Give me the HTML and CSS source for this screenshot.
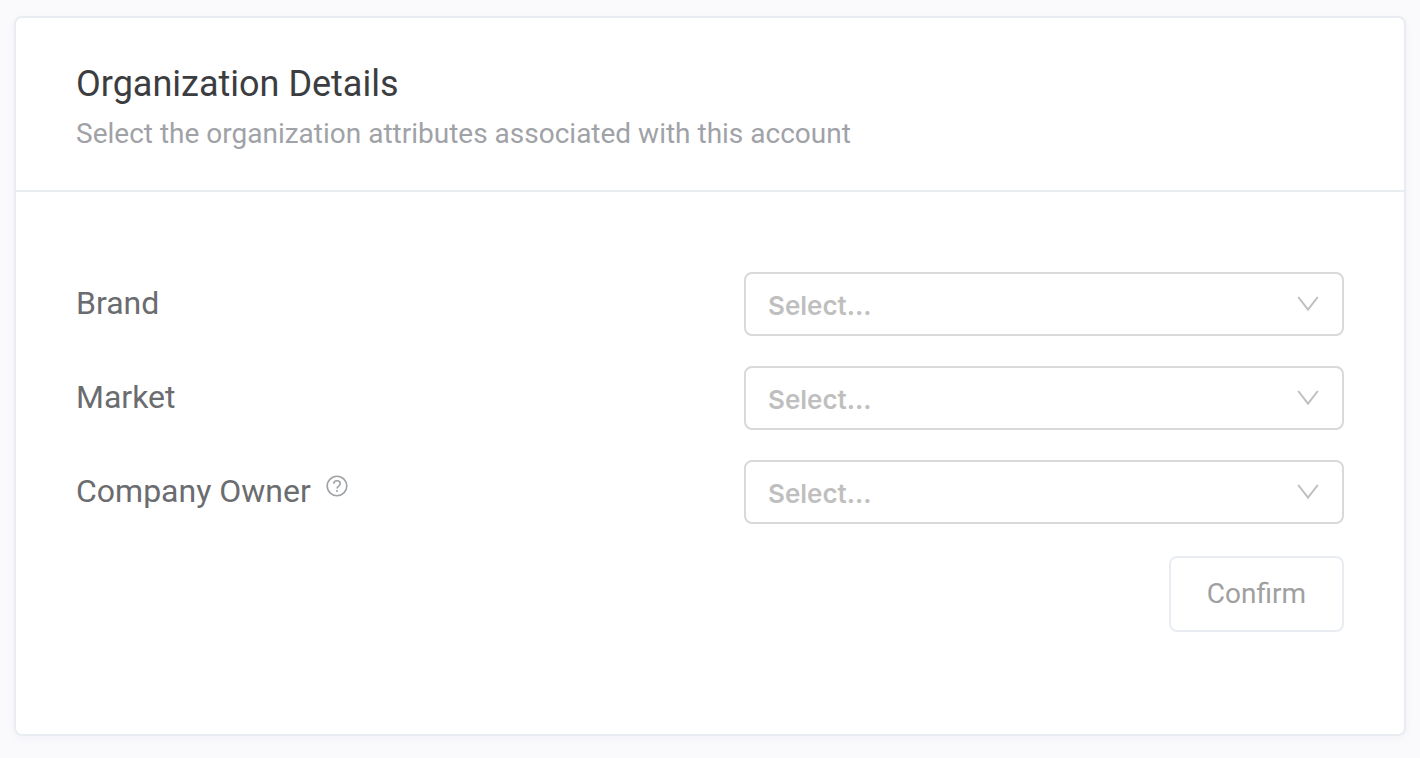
FILE: index.html
```html
<!DOCTYPE html>
<html lang="en">
<head>
  <meta charset="UTF-8" />
  <meta name="viewport" content="width=device-width, initial-scale=1.0" />
  <title>Organization Details</title>
  <link rel="stylesheet" href="styles.css">
</head>
<body>
  <main class="card">
    <header class="card-header">
      <h1 class="title">Organization Details</h1>
      <p class="subtitle">Select the organization attributes associated with this account</p>
    </header>
    <form class="card-body">
      <div class="form-row">
        <label class="form-label" for="brand">Brand</label>
        <div class="select-wrap">
          <select class="select" id="brand">
            <option value="">Select...</option>
          </select>
          <svg class="chevron" viewBox="0 0 22 16" aria-hidden="true">
            <path d="M1.2 1 11 13.6 20.8 1"/>
          </svg>
        </div>
      </div>
      <div class="form-row">
        <label class="form-label" for="market">Market</label>
        <div class="select-wrap">
          <select class="select" id="market">
            <option value="">Select...</option>
          </select>
          <svg class="chevron" viewBox="0 0 22 16" aria-hidden="true">
            <path d="M1.2 1 11 13.6 20.8 1"/>
          </svg>
        </div>
      </div>
      <div class="form-row">
        <div class="label-group">
          <label class="form-label" for="owner">Company Owner</label>
          <svg class="help-icon" viewBox="0 0 22 22" aria-hidden="true">
            <circle cx="11" cy="11" r="9.8"/>
            <path d="M7.8 8.7c0-1.7 1.4-2.9 3.2-2.9s3.2 1.2 3.2 2.9c0 2.4-3.2 2.4-3.2 4.9"/>
            <circle class="dot" cx="11" cy="15.9" r="1"/>
          </svg>
        </div>
        <div class="select-wrap">
          <select class="select" id="owner">
            <option value="">Select...</option>
          </select>
          <svg class="chevron" viewBox="0 0 22 16" aria-hidden="true">
            <path d="M1.2 1 11 13.6 20.8 1"/>
          </svg>
        </div>
      </div>
      <div class="actions">
        <button class="confirm-button" type="submit" disabled>Confirm</button>
      </div>
    </form>
  </main>
</body>
</html>
```
FILE: styles.css
```css
* {
  box-sizing: border-box;
}
body {
  margin: 0;
  padding: 16px 14px 22px;
  background-color: #fafafd;
  font-family: Roboto, sans-serif;
}
.card {
  background-color: #fff;
  border: 2px solid #e9edf2;
  border-radius: 8px;
  box-shadow: 0 2px 8px rgba(30, 40, 80, 0.04);
}
.card-header {
  padding: 44px 60px 38px;
  border-bottom: 2px solid #e9edf0;
}
.title {
  margin: 0;
  font-size: 36px;
  line-height: 44px;
  font-weight: 400;
  color: #3c3d41;
}
.subtitle {
  margin: 10px 0 0;
  font-size: 28px;
  line-height: 36px;
  color: #9fa2a7;
}
.card-body {
  display: flex;
  flex-direction: column;
  gap: 30px;
  padding: 80px 60px 102px;
}
.form-row {
  display: flex;
  align-items: center;
  justify-content: space-between;
  gap: 30px;
}
.form-label {
  padding-bottom: 2px;
  font-size: 32px;
  line-height: 40px;
  color: #6b6c70;
}
.label-group {
  display: flex;
  align-items: flex-start;
  gap: 15px;
}
.help-icon {
  width: 22px;
  height: 22px;
  margin-top: 4px;
  fill: none;
  stroke: #9fa2a7;
  stroke-width: 1.6;
}
.help-icon .dot {
  fill: #9fa2a7;
  stroke: none;
}
.select-wrap {
  position: relative;
  flex: 0 1 600px;
}
.select {
  display: block;
  width: 100%;
  height: 64px;
  padding: 2px 60px 0 22px;
  border: 2px solid #d9d9d9;
  border-radius: 8px;
  background-color: #fff;
  color: #bfbfbf;
  font-family: Inter, sans-serif;
  font-size: 26px;
  font-weight: 600;
  appearance: none;
  cursor: pointer;
}
.chevron {
  position: absolute;
  top: 24px;
  right: 25px;
  width: 22px;
  height: 16px;
  fill: none;
  stroke: #bfbfbf;
  stroke-width: 2;
  pointer-events: none;
}
.actions {
  display: flex;
  justify-content: flex-end;
  padding-top: 2px;
}
.confirm-button {
  height: 76px;
  padding: 0 36px 2px;
  border: 2px solid #e9edf2;
  border-radius: 8px;
  background-color: #fff;
  color: #a0a0a0;
  font-family: Roboto, sans-serif;
  font-size: 28px;
}
```
